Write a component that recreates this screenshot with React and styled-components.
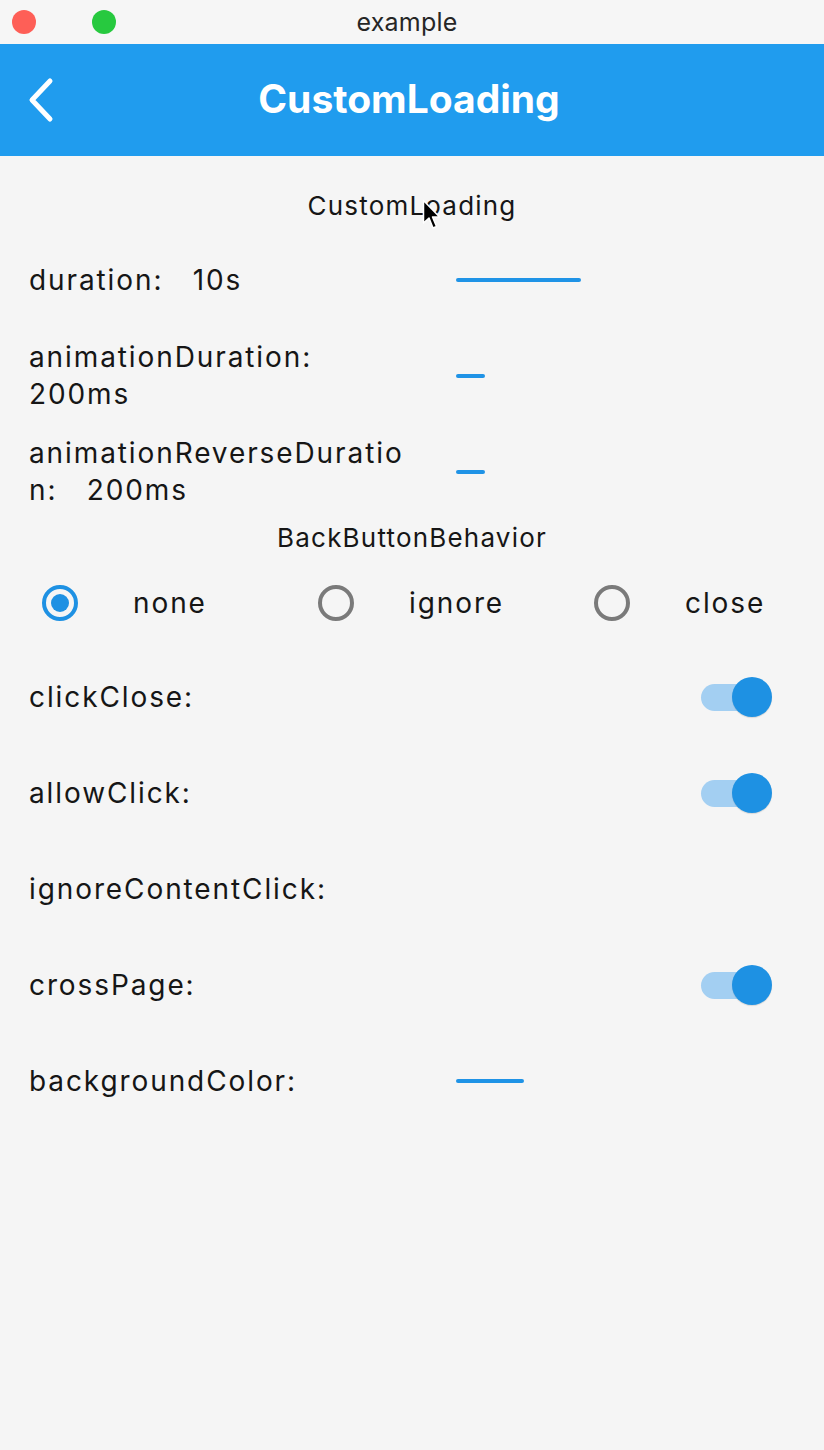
import React from 'react';
import styled, { createGlobalStyle } from 'styled-components';

const GlobalStyle = createGlobalStyle`
  html, body {
    margin: 0;
    padding: 0;
    background: #f5f5f5;
  }
`;

const Window = styled.div`
  position: relative;
  min-height: 100vh;
  background: #f5f5f5;
  font-family: Inter, 'Noto Sans', sans-serif;
  color: #161616;
`;

const TitleBar = styled.div`
  height: 44px;
  display: grid;
  grid-template-columns: 1fr auto 1fr;
  align-items: center;
  background: #f6f6f6;
`;

const Lights = styled.div`
  display: flex;
  gap: 56px;
  padding-left: 12px;
`;

const Light = styled.span`
  width: 24px;
  height: 24px;
  border-radius: 50%;
  background: ${p => p.$color};
`;

const WindowTitle = styled.div`
  font-size: 25px;
  color: #262626;
  letter-spacing: 0.2px;
  margin-right: 10px;
`;

const AppBar = styled.div`
  height: 112px;
  background: #209cee;
  display: grid;
  grid-template-columns: 1fr auto 1fr;
  align-items: center;
  color: #fff;
`;

const BackButton = styled.div`
  display: flex;
  align-items: center;
  padding-left: 24px;
`;

const AppTitle = styled.h1`
  margin: 0 6px 0 0;
  font-size: 39px;
  font-weight: 700;
  letter-spacing: 0;
  padding-bottom: 4px;
`;

const Heading = styled.div`
  text-align: center;
  font-size: 26px;
  letter-spacing: 1.2px;
  line-height: ${p => p.$h}px;
  padding-top: ${p => p.$top || 0}px;
  margin-bottom: ${p => p.$bottom || 0}px;
`;

const Row = styled.div`
  height: 96px;
  display: grid;
  grid-template-columns: 385px 1fr;
  column-gap: 42px;
  align-items: center;
  padding-left: 29px;
`;

const Label = styled.div`
  font-size: 28px;
  letter-spacing: 1.9px;
  line-height: 37px;
  white-space: pre-wrap;
  overflow-wrap: anywhere;
`;

const Track = styled.div`
  width: ${p => p.$w}px;
  height: 4px;
  border-radius: 2px;
  background: #1f93e6;
`;

const SwitchRow = styled.div`
  height: 96px;
  display: flex;
  align-items: center;
  justify-content: space-between;
  padding: 0 52px 0 29px;
`;

const Switch = styled.div`
  position: relative;
  width: 71px;
  height: 41px;
  visibility: ${p => (p.$hidden ? 'hidden' : 'visible')};

  &::before {
    content: '';
    position: absolute;
    left: 0;
    top: 7px;
    width: 64px;
    height: 27px;
    border-radius: 14px;
    background: #a3cff2;
  }

  &::after {
    content: '';
    position: absolute;
    right: 0;
    top: 0;
    width: 40px;
    height: 40px;
    border-radius: 50%;
    background: #1e91e3;
    box-shadow: 0 1px 1px rgba(0, 0, 0, 0.12);
  }
`;

const RadioGroup = styled.div`
  height: 93px;
  display: grid;
  grid-template-columns: 276px 276px 1fr;
  align-items: center;
  padding-left: 42px;
`;

const Option = styled.label`
  display: flex;
  align-items: center;
  gap: 55px;
  font-size: 28px;
  letter-spacing: 1.9px;
`;

const Radio = styled.span`
  box-sizing: border-box;
  width: 36px;
  height: 36px;
  border-radius: 50%;
  border: 4px solid ${p => (p.$checked ? '#1e91e3' : '#7a7a7a')};
  display: flex;
  align-items: center;
  justify-content: center;

  &::after {
    content: '';
    width: 18px;
    height: 18px;
    border-radius: 50%;
    background: ${p => (p.$checked ? '#1e91e3' : 'transparent')};
  }
`;

const Cursor = styled.svg`
  position: absolute;
  left: 422px;
  top: 199px;
`;

const sliders = [
  { label: 'duration:   10s', w: 125 },
  { label: 'animationDuration:   200ms', w: 29 },
  { label: 'animationReverseDuration:   200ms', w: 29 },
];

const switches = [
  { label: 'clickClose:', on: true },
  { label: 'allowClick:', on: true },
  { label: 'ignoreContentClick:', on: false },
  { label: 'crossPage:', on: true },
];

const behaviors = ['none', 'ignore', 'close'];

export default function App() {
  return (
    <Window>
      <GlobalStyle />
      <TitleBar>
        <Lights>
          <Light $color="#fe5f57" />
          <Light $color="#27c93f" />
        </Lights>
        <WindowTitle>example</WindowTitle>
        <div />
      </TitleBar>

      <AppBar>
        <BackButton>
          <svg width="32" height="46" viewBox="0 0 32 46">
            <path d="M26 4 L8 23 L26 42" fill="none" stroke="#fff" strokeWidth="5" strokeLinecap="round" strokeLinejoin="round" />
          </svg>
        </BackButton>
        <AppTitle>CustomLoading</AppTitle>
        <div />
      </AppBar>

      <Heading $h={40} $top={30} $bottom={6}>CustomLoading</Heading>

      {sliders.map(s => (
        <Row key={s.label}>
          <Label>{s.label}</Label>
          <Track $w={s.w} />
        </Row>
      ))}

      <Heading $h={36}>BackButtonBehavior</Heading>
      <RadioGroup>
        {behaviors.map((b, i) => (
          <Option key={b}>
            <Radio $checked={i === 0} />
            {b}
          </Option>
        ))}
      </RadioGroup>

      {switches.map(s => (
        <SwitchRow key={s.label}>
          <Label>{s.label}</Label>
          <Switch $hidden={!s.on} />
        </SwitchRow>
      ))}

      <Row>
        <Label>backgroundColor:</Label>
        <Track $w={68} />
      </Row>

      <Cursor width="20" height="32" viewBox="0 0 20 32">
        <path d="M1.5 1.5 L1.5 24 L7 19 L11 29 L14.5 27.5 L10.5 18 L17.5 18 Z" fill="#000" stroke="#fff" strokeWidth="1.5" strokeLinejoin="round" />
      </Cursor>
    </Window>
  );
}
